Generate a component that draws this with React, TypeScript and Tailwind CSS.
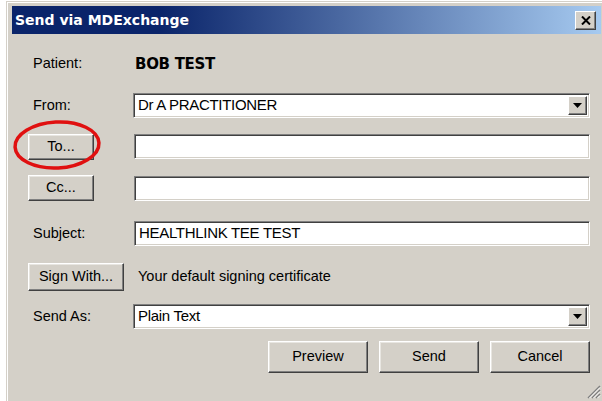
import type { ReactNode } from 'react';

const sans = { fontFamily: '"Liberation Sans", Arial, sans-serif' };

// classic raised 3D button
function Button({ children, className = '' }: { children: ReactNode; className?: string }) {
    return (
        <div
            className={`flex items-center justify-center bg-[#d4d0c8] border border-t-white border-l-white border-b-[#404040] border-r-[#404040] shadow-[inset_-1px_-1px_0_#808080,inset_1px_1px_0_#e8e6e1] text-[14.5px] text-black ${className}`}
        >
            {children}
        </div>
    );
}

// sunken white field
function Field({ value = '', combo = false, className = '' }: { value?: string; combo?: boolean; className?: string }) {
    return (
        <div
            className={`flex items-stretch bg-white border border-t-[#808080] border-l-[#808080] border-b-white border-r-white shadow-[inset_1px_1px_0_#404040,inset_-1px_-1px_0_#d4d0c8] ${className}`}
        >
            <div className="flex-1 flex items-center pl-[4px] text-[15px] text-black tracking-[-0.3px]">{value}</div>
            {combo && (
                <div className="my-[2px] mr-[2px] w-[19px] flex items-center justify-center bg-[#d4d0c8] border border-t-white border-l-white border-b-[#404040] border-r-[#404040] shadow-[inset_-1px_-1px_0_#808080]">
                    <svg width="9" height="5" viewBox="0 0 9 5">
                        <path d="M0 0h9L4.5 5z" fill="#000" />
                    </svg>
                </div>
            )}
        </div>
    );
}

export default function App() {
    return (
        <main className="w-[602px] h-[401px] bg-white overflow-hidden pl-[6px] pt-[1px]" style={sans}>
            <div className="relative w-[600px] h-[410px] bg-[#d4d0c8] border border-t-[#d4d0c8] border-l-[#d4d0c8] border-b-[#404040] border-r-[#404040] shadow-[inset_1px_1px_0_#ffffff] p-[4px] pl-[5px]">
                {/* title bar */}
                <div className="h-[28px] flex items-center justify-between pl-[3px] pr-[5px] bg-[linear-gradient(90deg,#0a246a_0%,#0a246a_25%,#a6caf0_100%)]">
                    <span className="text-white font-bold text-[14px]" style={{ fontFamily: '"DejaVu Sans", Verdana, sans-serif' }}>
                        Send via MDExchange
                    </span>
                    <div className="w-[21px] h-[19px] flex items-center justify-center bg-[#d4d0c8] border border-t-white border-l-white border-b-[#404040] border-r-[#404040] shadow-[inset_-1px_-1px_0_#808080]">
                        <svg width="10" height="9" viewBox="0 0 10 9">
                            <path d="M1 0.5l8 8M9 0.5l-8 8" stroke="#000" strokeWidth="2" />
                        </svg>
                    </div>
                </div>

                <div className="flex flex-col pl-[16px] pr-[2px]">
                    <div className="h-[20px] mt-[20px] flex items-center">
                        <span className="w-[107px] pl-[5px] text-[14.5px]">Patient:</span>
                        <span className="font-bold text-[15px] tracking-[-0.3px]" style={{ fontFamily: '"DejaVu Sans", Verdana, sans-serif' }}>
                            BOB TEST
                        </span>
                    </div>

                    <div className="h-[25px] mt-[19px] flex items-center">
                        <span className="w-[105px] pl-[5px] text-[14.5px]">From:</span>
                        <Field value="Dr A PRACTITIONER" combo className="w-[457px] h-[25px]" />
                    </div>

                    <div className="h-[27px] mt-[15px] flex items-center">
                        <div className="w-[106px]">
                            <Button className="w-[66px] h-[26px]">To...</Button>
                        </div>
                        <Field className="w-[456px] h-[25px]" />
                    </div>

                    <div className="h-[26px] mt-[15px] flex items-center">
                        <div className="w-[106px]">
                            <Button className="w-[66px] h-[26px]">Cc...</Button>
                        </div>
                        <Field className="w-[456px] h-[25px]" />
                    </div>

                    <div className="h-[25px] mt-[20px] flex items-center">
                        <span className="w-[106px] pl-[5px] text-[14.5px]">Subject:</span>
                        <Field value="HEALTHLINK TEE TEST" className="w-[456px] h-[25px]" />
                    </div>

                    <div className="h-[28px] mt-[17px] flex items-center">
                        <div className="w-[110px]">
                            <Button className="w-[96px] h-[28px]">Sign With...</Button>
                        </div>
                        <span className="text-[14.5px]">Your default signing certificate</span>
                    </div>

                    <div className="h-[25px] mt-[13px] flex items-center">
                        <span className="w-[105px] pl-[5px] text-[14.5px]">Send As:</span>
                        <Field value="Plain Text" combo className="w-[457px] h-[25px]" />
                    </div>

                    <div className="h-[32px] mt-[12px] flex justify-end gap-[11px] pr-[9px]">
                        <Button className="w-[100px] h-[32px]">Preview</Button>
                        <Button className="w-[100px] h-[32px]">Send</Button>
                        <Button className="w-[100px] h-[32px]">Cancel</Button>
                    </div>
                </div>

                {/* size grip */}
                <svg className="absolute left-[578px] top-[381px]" width="16" height="16" viewBox="0 0 16 16">
                    <path d="M15 3L3 15M15 7L7 15M15 11L11 15" stroke="#808080" strokeWidth="1.5" />
                    <path d="M15 4.5L4.5 15M15 8.5L8.5 15M15 12.5L12.5 15" stroke="#fff" strokeWidth="1" />
                </svg>

                {/* red marker around the To... button */}
                <svg className="absolute left-[2px] top-[115px]" width="96" height="56" viewBox="0 0 96 56">
                    <ellipse cx="48" cy="28" rx="42" ry="23" fill="none" stroke="#e01010" strokeWidth="3.5" transform="rotate(-3 48 28)" />
                </svg>
            </div>
        </main>
    );
}
